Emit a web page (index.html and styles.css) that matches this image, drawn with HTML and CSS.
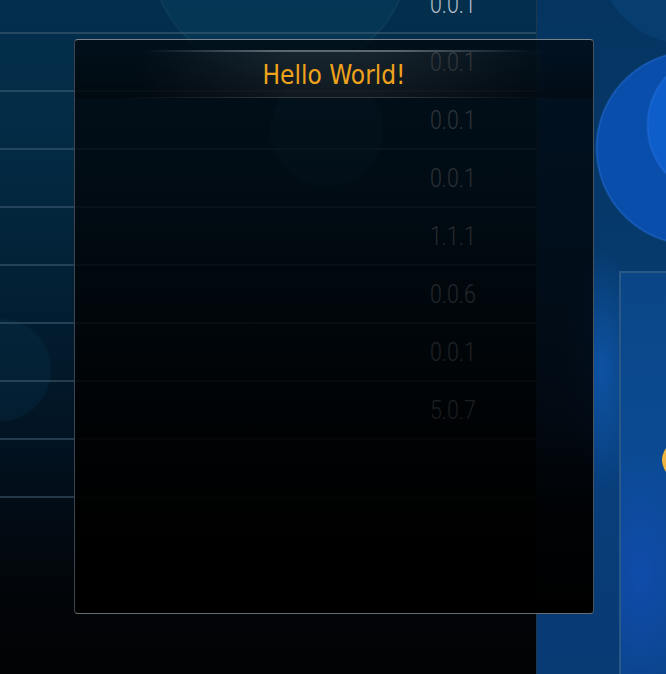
FILE: index.html
```html
<!DOCTYPE html>
<html lang="en">
<head>
<meta charset="utf-8">
<title>Hello World!</title>
<link rel="stylesheet" href="styles.css">
</head>
<body>
<div class="screen">
  <div class="list">
    <div class="rows">
      <div class="row"><span class="ver">0.0.1</span></div>
      <div class="row"><span class="ver">0.0.1</span></div>
      <div class="row"><span class="ver">0.0.1</span></div>
      <div class="row"><span class="ver">0.0.1</span></div>
      <div class="row"><span class="ver">1.1.1</span></div>
      <div class="row"><span class="ver">0.0.6</span></div>
      <div class="row"><span class="ver">0.0.1</span></div>
      <div class="row"><span class="ver">5.0.7</span></div>
      <div class="row"></div>
    </div>
  </div>
  <div class="side">
    <div class="panel"><div class="blob"></div></div>
  </div>
  <div class="dialog">
    <div class="dialog-head">
      <h1 class="dialog-title">Hello World!</h1>
    </div>
  </div>
</div>
</body>
</html>
```
FILE: styles.css
```css
html, body {
  margin: 0;
  padding: 0;
}
body {
  background: #020305;
  overflow: hidden;
  font-family: Roboto, "Liberation Sans", sans-serif;
}
.screen {
  position: relative;
  display: flex;
  width: 666px;
  height: 674px;
  overflow: hidden;
}
.list {
  width: 536px;
  flex: none;
  border-right: 1px solid #1b384d;
  background:
    radial-gradient(circle at 280px -55px, rgba(8,70,100,0.35) 0 130px, rgba(30,90,120,0.35) 131px, transparent 133px),
    radial-gradient(circle at 327px 130px, rgba(20,80,110,0.35) 0 55px, transparent 58px),
    radial-gradient(circle at 0px 370px, rgba(10,60,90,0.22) 0 50px, transparent 52px),
    linear-gradient(180deg, #032f4d 0, #032a43 160px, #021d30 320px, #021322 440px, #020a12 530px, #020508 600px, #020305 674px);
}
.rows {
  margin-top: -24px;
  display: flex;
  flex-direction: column;
}
.row {
  box-sizing: border-box;
  height: 58px;
  border-bottom: 2px solid rgba(70, 100, 120, 0.5);
  display: flex;
  align-items: center;
  justify-content: flex-end;
  padding-right: 60px;
}
.ver {
  display: inline-block;
  font-family: Roboto, sans-serif;
  font-weight: 300;
  font-size: 26px;
  line-height: 30px;
  color: #b4bec8;
  transform: scaleX(0.82);
  transform-origin: right center;
}
.side {
  flex: 1;
  display: flex;
  flex-direction: column;
  padding: 271px 0 0 82px;
  overflow: hidden;
  background:
    radial-gradient(circle at 183px 125px, #0d5dcb 0 71px, #1967d2 72px, transparent 74px),
    radial-gradient(circle at 156px 148px, #0a4eab 0 95px, #1a5fc0 96px, transparent 98px),
    radial-gradient(circle at 150px -45px, #073e70 0 88px, transparent 90px),
    radial-gradient(ellipse 40px 120px at 65px 370px, rgba(20,100,200,0.55), transparent),
    linear-gradient(180deg, #053460 0, #063a6c 250px, #083f7c 450px, #083a74 674px);
}
.panel {
  flex: 1;
  border-top: 2px solid #2a5887;
  border-left: 2px solid #2a5887;
  background:
    radial-gradient(ellipse 60px 120px at 20px 300px, rgba(20,80,190,0.6), transparent),
    linear-gradient(180deg, #0a4686, #0b4a94 200px, #0a448c);
  overflow: hidden;
}
.blob {
  margin: 164px 0 0 41px;
  width: 56px;
  height: 46px;
  border-radius: 50%;
  background: #f2b43e;
}
.dialog {
  position: absolute;
  left: 74px;
  top: 39px;
  width: 518px;
  height: 573px;
  border: 1px solid #4a525a;
  border-top-color: #7b8188;
  border-bottom-color: #6a6d70;
  border-left-color: #3d4650;
  border-radius: 4px;
  background: linear-gradient(180deg,
    rgba(0,4,8,0.72) 0,
    rgba(0,3,6,0.78) 180px,
    rgba(0,0,0,0.85) 370px,
    rgba(0,0,0,0.96) 470px,
    #000 100%);
}
.dialog-head {
  margin-top: 10px;
  height: 48px;
  background:
    linear-gradient(90deg, transparent 14%, rgba(150,158,166,0.55) 38%, rgba(150,158,166,0.55) 62%, transparent 88%) top / 100% 2px no-repeat,
    linear-gradient(90deg, transparent 8%, rgba(110,120,130,0.35) 40%, rgba(110,120,130,0.35) 60%, transparent 92%) bottom / 100% 1px no-repeat,
    linear-gradient(180deg, rgba(0,0,0,0) 0, rgba(0,0,0,0.35) 100%),
    linear-gradient(90deg, transparent 12%, rgba(80,88,96,0.28) 42%, rgba(80,88,96,0.28) 58%, transparent 92%);
}
.dialog-title {
  margin: 0;
  font-family: "DejaVu Sans Condensed", "DejaVu Sans", sans-serif;
  font-stretch: condensed;
  font-weight: normal;
  font-size: 26px;
  line-height: 50px;
  text-align: center;
  color: #eea31b;
}
```
